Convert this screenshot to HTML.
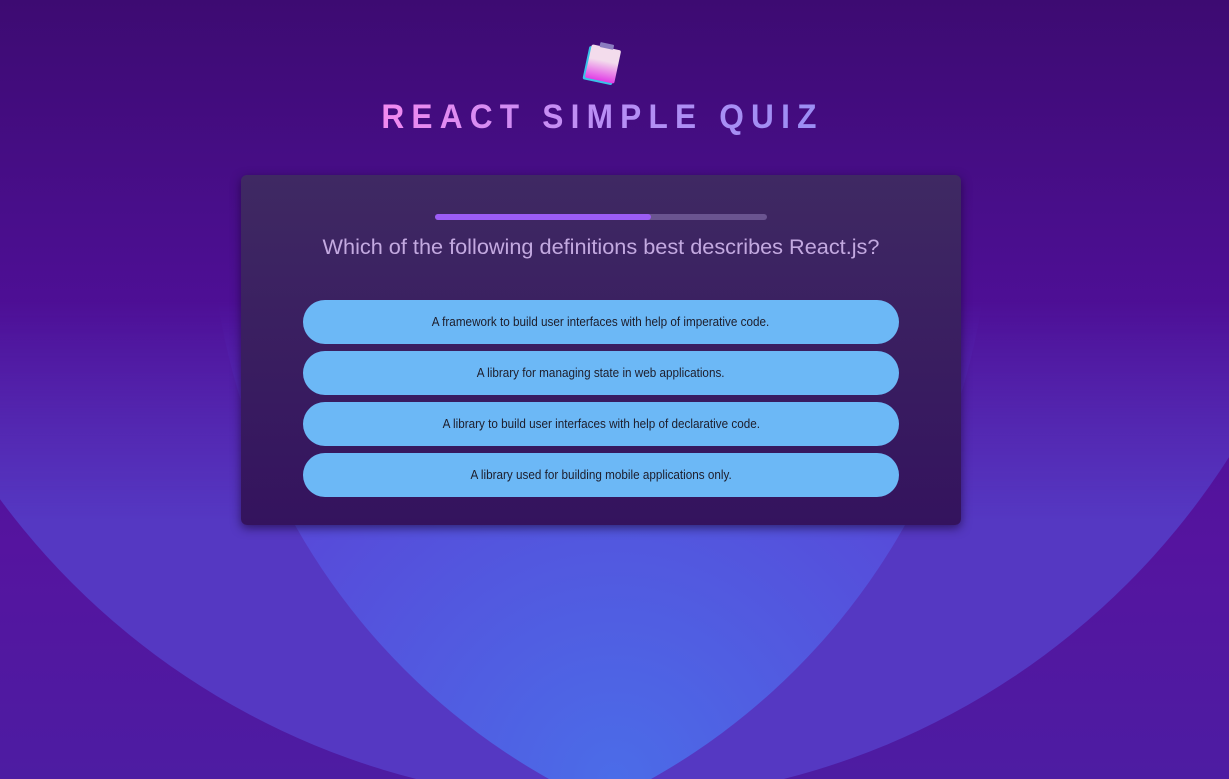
<!DOCTYPE html>
<html><head><style>
html,body{margin:0;width:1229px;height:779px;overflow:hidden}
body{position:relative;font-family:"Liberation Sans",sans-serif;
background:linear-gradient(#3d0b72 0%,#4e0f96 40%,#55149f 70%,#4d1ca2 100%);}
svg.bg{position:absolute;left:0;top:0}
h1{position:absolute;top:98px;left:0;width:1229px;text-align:center;margin:0;font-size:34px;font-weight:bold;letter-spacing:7.75px;transform:translateX(-12px) scaleX(0.93)}
h1 span{background:linear-gradient(90deg,#f28af0,#b98ef5 50%,#9a8ef4);-webkit-background-clip:text;background-clip:text;color:transparent}
.card{position:absolute;left:241px;top:175px;width:720px;height:350px;border-radius:6px;background:linear-gradient(#3f2963,#34135e);box-shadow:0 3px 10px rgba(20,0,40,.6)}
.track{position:absolute;left:194px;top:39px;width:332px;height:6px;border-radius:3px;background:#6a5490}
.fill{width:216px;height:6px;border-radius:3px;background:#9c5cf6}
.q{position:absolute;top:59px;width:720px;text-align:center;color:#c3a9e0;font-size:21.7px}
.b{position:absolute;left:62px;width:596px;height:44px;border-radius:22px;background:#6cb8f6;color:#1d1d2b;font-size:13px;text-align:center;line-height:44px}
.b span{display:inline-block;transform:scaleX(.9)}
</style></head><body>
<svg class="bg" width="1229" height="779">
<defs>
<clipPath id="cr"><circle cx="874" cy="200" r="664"/></clipPath>
<linearGradient id="fade" x1="0" y1="0" x2="0" y2="1" gradientUnits="userSpaceOnUse" x2u="0"><stop offset="0" stop-color="#fff" stop-opacity="0"/></linearGradient>
<linearGradient id="m" x1="0" y1="300" x2="0" y2="520" gradientUnits="userSpaceOnUse"><stop offset="0" stop-color="#fff" stop-opacity="0"/><stop offset="1" stop-color="#fff" stop-opacity="1"/></linearGradient>
<mask id="mk"><rect width="1229" height="779" fill="url(#m)"/></mask>
<radialGradient id="lg" cx="614" cy="779" r="420" gradientUnits="userSpaceOnUse"><stop offset="0" stop-color="#4b6ce8"/><stop offset="1" stop-color="#5848d8"/></radialGradient>
</defs>
<g mask="url(#mk)">
<circle cx="600" cy="56" r="746" fill="#5538c2"/>
<circle cx="326" cy="200" r="664" fill="url(#lg)" clip-path="url(#cr)"/>
</g>
</svg>
<svg style="position:absolute;left:578px;top:40px" width="50" height="48" viewBox="0 0 50 48">
<g transform="rotate(12 25 24)">
<rect x="8" y="9" width="30" height="34" rx="2" fill="#39c3e8"/>
<rect x="10" y="7" width="30" height="34" rx="2" fill="url(#g)"/>
<rect x="18" y="3" width="14" height="5" rx="1" fill="#8a7cc0"/>
</g>
<defs><linearGradient id="g" x1="0" y1="0" x2="0" y2="1"><stop offset="0.4" stop-color="#f3dcec"/><stop offset="1" stop-color="#e23ee6"/></linearGradient></defs>
</svg>
<h1><span>REACT SIMPLE QUIZ</span></h1>
<div class="card">
<div class="track"><div class="fill"></div></div>
<div class="q">Which of the following definitions best describes React.js?</div>
<div class="b" style="top:125px"><span>A framework to build user interfaces with help of imperative code.</span></div>
<div class="b" style="top:176px"><span>A library for managing state in web applications.</span></div>
<div class="b" style="top:227px"><span>A library to build user interfaces with help of declarative code.</span></div>
<div class="b" style="top:278px"><span>A library used for building mobile applications only.</span></div>
</div>
</body></html>
